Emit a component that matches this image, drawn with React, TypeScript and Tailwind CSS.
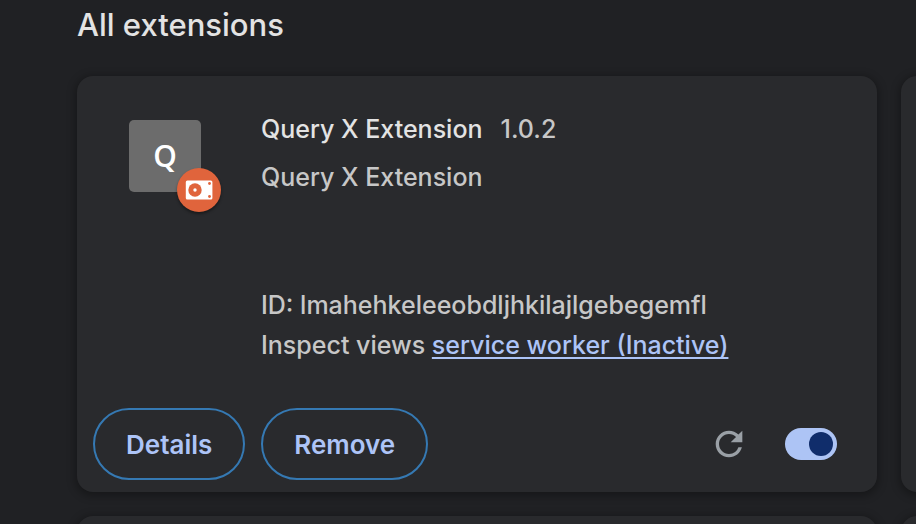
import React, { useState } from 'react';

const cardClass = 'rounded-2xl bg-[#292a2d] shadow-[0_2px_8px_2px_rgba(0,0,0,0.3)]';

const outlineButton =
  'h-[72px] rounded-full border-2 border-[#3579b3] px-[31px] text-[26px] font-semibold text-[#adc4f7]';

const ExtensionIcon: React.FC = () => (
  <div className="relative h-[72px] w-[72px] shrink-0">
    <div className="flex h-full items-center justify-center rounded-[5px] bg-[#6c6c6c] font-['Open_Sans',sans-serif] text-[30px] leading-8 font-semibold text-white">
      Q
    </div>
    {/* Unpacked extension badge */}
    <div className="absolute -right-5 -bottom-5 flex h-11 w-11 items-center justify-center rounded-full bg-[#e0643c] shadow-[0_2px_3px_rgba(0,0,0,0.4)]">
      <svg width="28" height="20" viewBox="0 0 28 20" aria-label="Unpacked extension">
        <rect x="0.8" y="0.5" width="26.6" height="19" rx="1.5" fill="#fff" />
        <circle cx="10" cy="10" r="6.7" fill="#e0643c" />
        <circle cx="10" cy="10" r="1.7" fill="#fff" />
        <circle cx="24.5" cy="3.5" r="1.4" fill="#e0643c" />
        <circle cx="24.5" cy="16.5" r="1.4" fill="#e0643c" />
      </svg>
    </div>
  </div>
);

const ExtensionCard: React.FC = () => {
  const [enabled, setEnabled] = useState(true);

  return (
    <article className={`flex h-[416px] flex-col justify-between ${cardClass}`}>
      <div className="flex gap-[60px] pt-11 pr-10 pl-[52px] text-[25px] font-medium text-[#c7c7c7]">
        <ExtensionIcon />
        <div className="min-w-0 -mt-3">
          <div className="flex gap-[18px] leading-[42px]">
            <h2 className="text-[#e3e3e3]">Query X Extension</h2>
            <span>1.0.2</span>
          </div>
          <p className="mt-1.5 leading-[42px]">Query X Extension</p>
          <div className="mt-[87px] leading-10">
            <p>ID: lmahehkeleeobdljhkilajlgebegemfl</p>
            <p>
              Inspect views{' '}
              <a href="#service-worker" className="text-[#adc4f7] underline decoration-2 underline-offset-3">
                service worker (Inactive)
              </a>
            </p>
          </div>
        </div>
      </div>

      {/* Actions */}
      <div className="flex items-center pr-10 pb-3 pl-4">
        <div className="flex gap-4">
          <button type="button" className={outlineButton}>Details</button>
          <button type="button" className={outlineButton}>Remove</button>
        </div>
        <button type="button" aria-label="Reload" className="mr-9 ml-auto text-[#9aa0a6]">
          <svg width="40" height="40" viewBox="0 0 24 24" fill="currentColor">
            <path d="M17.65 6.35A7.958 7.958 0 0 0 12 4c-4.42 0-7.99 3.58-7.99 8s3.57 8 7.99 8c3.73 0 6.84-2.55 7.73-6h-2.08A5.99 5.99 0 0 1 12 18c-3.31 0-6-2.69-6-6s2.69-6 6-6c1.66 0 3.14.69 4.22 1.78L13 11h7V4l-2.35 2.35z" />
          </svg>
        </button>
        <input
          type="checkbox"
          role="switch"
          aria-label="Enable Query X Extension"
          checked={enabled}
          onChange={() => setEnabled(!enabled)}
          className="flex h-8 w-[52px] appearance-none items-center rounded-full bg-[#5f6368] px-1 before:h-6 before:w-6 before:rounded-full before:bg-[#dadce0] checked:justify-end checked:bg-[#adc4f5] checked:before:bg-[#102d6b]"
        />
      </div>
    </article>
  );
};

const App: React.FC = () => {
  return (
    <main className="h-screen overflow-hidden bg-[#202124] pl-[77px] font-[Inter,sans-serif]">
      <h1 className="pt-[5px] text-[31px] leading-10 font-medium text-[#e3e3e3]">All extensions</h1>
      <div className="mt-[31px] grid grid-cols-[calc(100%-39px)_calc(100%-39px)] gap-6">
        <ExtensionCard />
        <article className={cardClass} />
        <article className={`h-[416px] ${cardClass}`} />
        <article className={`h-[416px] ${cardClass}`} />
      </div>
    </main>
  );
};

export default App;
